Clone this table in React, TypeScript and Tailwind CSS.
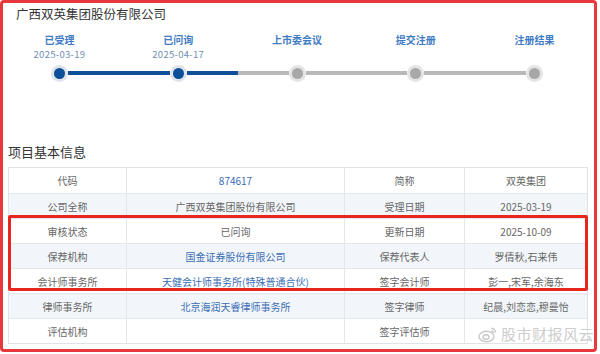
import React from "react";

const font = { fontFamily: '"Noto Sans CJK SC", "Noto Sans", sans-serif' };

type Step = { label: string; date?: string; done: boolean; leftBlue: boolean; rightBlue: boolean; first?: boolean; last?: boolean };

const steps: Step[] = [
  { label: "已受理", date: "2025-03-19", done: true, leftBlue: false, rightBlue: true, first: true },
  { label: "已问询", date: "2025-04-17", done: true, leftBlue: true, rightBlue: true },
  { label: "上市委会议", done: false, leftBlue: false, rightBlue: false },
  { label: "提交注册", done: false, leftBlue: false, rightBlue: false },
  { label: "注册结果", done: false, leftBlue: false, rightBlue: false, last: true },
];

type Cell = { text: string; link?: boolean };
const rows: [Cell, Cell, Cell, Cell][] = [
  [{ text: "代码" }, { text: "874617", link: true }, { text: "简称" }, { text: "双英集团" }],
  [{ text: "公司全称" }, { text: "广西双英集团股份有限公司" }, { text: "受理日期" }, { text: "2025-03-19" }],
  [{ text: "审核状态" }, { text: "已问询" }, { text: "更新日期" }, { text: "2025-10-09" }],
  [{ text: "保荐机构" }, { text: "国金证券股份有限公司", link: true }, { text: "保荐代表人" }, { text: "罗倩秋,石来伟" }],
  [{ text: "会计师事务所" }, { text: "天健会计师事务所(特殊普通合伙)", link: true }, { text: "签字会计师" }, { text: "彭一,宋军,余海东" }],
  [{ text: "律师事务所" }, { text: "北京海润天睿律师事务所", link: true }, { text: "签字律师" }, { text: "纪晨,刘恋恋,穆曼怡" }],
  [{ text: "评估机构" }, { text: "" }, { text: "签字评估师" }, { text: "" }],
];

const colW = ["w-[117px]", "w-[218px]", "w-[120px]", "flex-1"];

export default function App() {
  return (
    <div className="w-[600px] h-[354px] bg-white overflow-hidden relative" style={font}>
      <div className="w-[597px] h-[352px] border-[3px] border-[#e8383d] rounded-[4px] flex flex-col">
        <div className="pl-[13px] mt-[2px] text-[12.5px] leading-[18px] text-[#333]">广西双英集团股份有限公司</div>
        <div className="flex mt-[10px] -ml-[3px]">
          {steps.map((s, i) => (
            <div key={i} className="w-[119px] flex flex-col items-center">
              <div className="text-[10px] leading-[13px] h-[13px] font-bold text-[#3f7bc4]">{s.label}</div>
              <div className="text-[9.5px] leading-[12px] h-[12px] mt-[2px] text-[#6f8db3] tracking-[0.3px]">{s.date ?? ""}</div>
              <div className="flex items-center w-full h-[14px] mt-[6px]">
                <div className={`flex-1 h-[4px] ${s.first ? "bg-transparent" : s.leftBlue ? "bg-[#0d4f99]" : "bg-[#b9b9b9]"}`} />
                <div className={`w-[17px] h-[17px] rounded-full flex items-center justify-center ${s.done ? "bg-[#dfe3ea]" : "bg-[#e4e4e4]"}`}>
                  <div className={`w-[11px] h-[11px] rounded-full ${s.done ? "bg-[#0d4f99]" : "bg-[#a8a8a8]"}`} />
                </div>
                <div className={`flex-1 h-[4px] ${s.last ? "bg-transparent" : s.rightBlue ? "bg-[#0d4f99]" : "bg-[#b9b9b9]"}`} />
              </div>
            </div>
          ))}
        </div>
        <div className="pl-[5px] mt-[62px] text-[13px] leading-[20px] text-[#333]">项目基本信息</div>
        <div className="ml-[5px] mr-[6px] mt-[5px] border border-[#dfe3e8]">
          {rows.map((r, i) => (
            <div key={i} className={`flex h-[25px] ${i > 0 ? "border-t border-[#e3e6ea]" : ""} ${i % 2 === 1 ? "bg-[#f2f6fa]" : "bg-white"}`}>
              {r.map((c, j) => (
                <div
                  key={j}
                  className={`${colW[j]} ${j > 0 ? "border-l border-[#e3e6ea]" : ""} flex items-center justify-center text-[10px] whitespace-nowrap ${c.link ? "text-[#3a6db5]" : "text-[#666]"}`}
                >
                  {c.text}
                </div>
              ))}
            </div>
          ))}
        </div>
      </div>
      <div className="absolute left-[8px] top-[215px] w-[580px] h-[76px] border-[3px] border-[#e8261f] rounded-[2px]" />
      <div className="absolute right-[6px] top-[324px] flex items-center gap-[3px] text-[#c8c8c8] opacity-90">
        <svg width="20" height="17" viewBox="0 0 20 17" fill="none" stroke="#c4c4c4" strokeWidth="1.4">
          <ellipse cx="8.5" cy="10.5" rx="7.5" ry="5.2" />
          <ellipse cx="8" cy="11" rx="3" ry="2.2" />
          <path d="M13 2.5c2.5-0.5 4.8 1.5 4.3 4.2" />
          <path d="M13.3 5c1.2-0.2 2.2 0.7 2 1.9" />
        </svg>
        <span className="text-[15px] leading-[20px] tracking-[0.5px]">股市财报风云</span>
      </div>
    </div>
  );
}
